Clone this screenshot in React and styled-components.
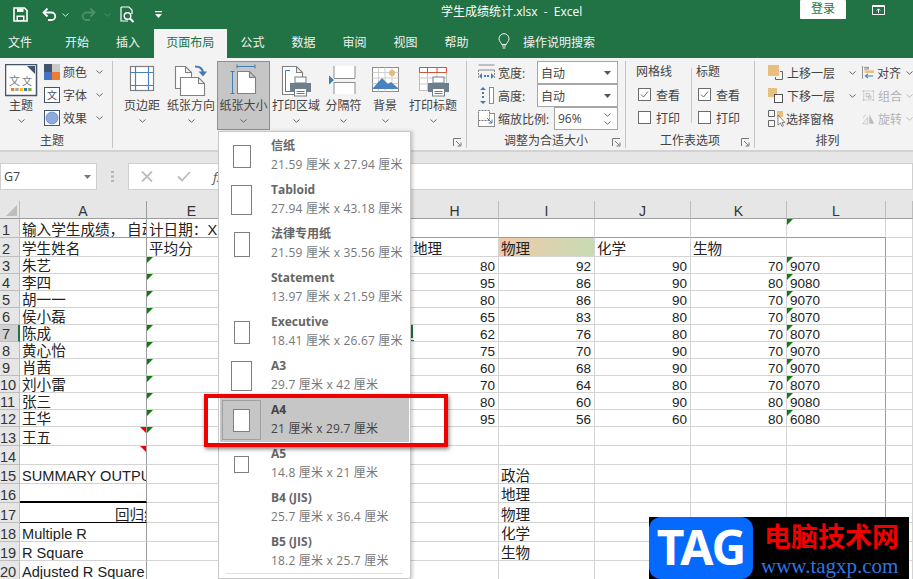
import React from 'react';
import styled, { createGlobalStyle } from 'styled-components';

const UI_FONT = `"Open Sans", "Noto Sans CJK SC", sans-serif`;
const SHEET_FONT = `"Liberation Sans", "Noto Sans CJK SC", sans-serif`;
const GREEN = '#217346';

const GlobalStyle = createGlobalStyle`
  html, body {
    margin: 0;
    padding: 0;
    background: #fff;
    overflow: hidden;
  }
  * {
    box-sizing: border-box;
  }
`;

const Page = styled.div`
  position: relative;
  width: 913px;
  height: 579px;
  overflow: hidden;
  font-family: ${UI_FONT};
  font-size: 12px;
  color: #444;
`;

/* title bar */
const TitleBar = styled.div`
  height: 29px;
  background: ${GREEN};
  display: flex;
  align-items: center;
  color: #fff;
`;

const Qat = styled.div`
  width: 441px;
  height: 100%;
  display: flex;
  align-items: center;
  padding-left: 13px;
`;

const QatItem = styled.span`
  display: flex;
  margin-left: ${(p) => p.$ml || 0}px;
  transform: ${(p) => (p.$flip ? 'scaleX(-1)' : 'none')};
`;

const DocTitle = styled.div`
  width: 359px;
  font-size: 12px;
  line-height: 16px;
  margin-top: -6px;
  white-space: pre;
`;

const LoginButton = styled.div`
  width: 46px;
  height: 19px;
  margin-top: -10px;
  background: #fff;
  border-radius: 1px;
  color: ${GREEN};
  text-align: center;
  line-height: 18px;
`;

const RestoreIcon = styled.span`
  display: flex;
  margin: -10px 0 0 26px;
`;

/* tabs */
const TabBar = styled.div`
  height: 29px;
  background: ${GREEN};
  display: flex;
  align-items: stretch;
  color: #f1f1f1;
`;

const Tab = styled.div`
  width: ${(p) => p.$w}px;
  display: flex;
  align-items: center;
  justify-content: ${(p) => (p.$start ? 'flex-start' : 'center')};
  padding: ${(p) => (p.$start ? '0 0 4px 8px' : '0 0 4px')};
  background: ${(p) => (p.$active ? '#f3f3f3' : 'transparent')};
  color: ${(p) => (p.$active ? GREEN : 'inherit')};
`;

const SearchTab = styled.div`
  display: flex;
  align-items: center;
  gap: 13px;
  margin-left: 16px;
  padding-bottom: 4px;
`;

/* ribbon */
const Ribbon = styled.div`
  height: 94px;
  padding-top: 3px;
  background: #f3f3f3;
  border-bottom: 2px solid #d2d2d2;
  display: flex;
  align-items: flex-start;
`;

const Group = styled.div`
  position: relative;
  width: ${(p) => p.$w}px;
  height: 87px;
  flex: none;
  border-right: ${(p) => (p.$last ? 'none' : '1px solid #c4c4c4')};
  display: flex;
  flex-direction: column;
`;

const GroupBody = styled.div`
  height: 73px;
  display: flex;
  padding-left: ${(p) => p.$pl || 0}px;
`;

const GroupLabel = styled.div`
  flex: 1;
  text-align: center;
  line-height: 14px;
  color: #444;
  padding-right: ${(p) => p.$pr || 0}px;
`;

const Launcher = styled.span`
  position: absolute;
  right: 4px;
  bottom: 1px;
  display: flex;
`;

const BigButton = styled.div`
  width: ${(p) => p.$w}px;
  height: 69px;
  flex: none;
  display: flex;
  flex-direction: column;
  align-items: center;
  padding-top: 3px;
  background: ${(p) => (p.$active ? '#c6c6c6' : 'transparent')};
  outline: ${(p) => (p.$active ? '1px solid #8f8f8f' : 'none')};
  outline-offset: -1px;
  white-space: nowrap;
`;

const BigIcon = styled.span`
  height: 33px;
  display: flex;
`;

const BigLabel = styled.span`
  line-height: 16px;
  margin-top: 1px;
`;

const BigChevron = styled.span`
  display: flex;
  margin-top: 5px;
`;

const ThemeColumn = styled.div`
  margin-left: 5px;
  padding-top: 3px;
  display: flex;
  flex-direction: column;
  gap: 7px;
`;

const ThemeRow = styled.div`
  display: flex;
  align-items: center;
  height: 16px;
  gap: 3px;
`;

const RowChevron = styled.span`
  display: flex;
  margin-left: ${(p) => p.$ml || 6}px;
`;

const ScaleColumn = styled.div`
  width: 100%;
  padding: 0 7px 0 11px;
  display: flex;
  flex-direction: column;
`;

const ScaleRow = styled.div`
  height: 23px;
  display: flex;
  align-items: center;
  gap: 3px;
  justify-content: flex-start;
`;

const ComboBox = styled.div`
  width: ${(p) => p.$w}px;
  height: 23px;
  margin-left: auto;
  background: #fff;
  border: 1px solid #a6a6a6;
  display: flex;
  align-items: center;
  justify-content: space-between;
  padding: 0 6px 0 3px;
`;

const SpinArrows = styled.span`
  display: flex;
  flex-direction: column;
  gap: 4px;
`;

const OptionColumn = styled.div`
  width: ${(p) => p.$w}px;
  padding-left: ${(p) => p.$pl || 0}px;
  display: flex;
  flex-direction: column;
`;

const OptionTitle = styled.div`
  height: 22px;
  line-height: 22px;
`;

const OptionRow = styled.div`
  height: 23px;
  display: flex;
  align-items: center;
  gap: 5px;
  padding-left: 2px;
`;

const CheckBox = styled.span`
  width: 13px;
  height: 13px;
  background: #fff;
  border: 1px solid #6b6b6b;
  display: flex;
`;

const OptionDivider = styled.span`
  width: 1px;
  height: 55px;
  margin-top: 7px;
  background: #c8c8c8;
  flex: none;
`;

const ArrangeColumn = styled.div`
  width: ${(p) => p.$w}px;
  flex: none;
  display: flex;
  flex-direction: column;
`;

const ArrangeRow = styled.div`
  height: 23px;
  display: flex;
  align-items: center;
  gap: ${(p) => p.$gap || 3}px;
  white-space: nowrap;
  color: ${(p) => (p.$off ? '#b4b4b4' : '#444')};
`;

/* formula bar */
const FormulaArea = styled.div`
  height: 49px;
  padding-top: 11px;
  background: #e6e6e6;
  display: flex;
  align-items: flex-start;
`;

const NameBox = styled.div`
  width: 97px;
  height: 27px;
  background: #fff;
  border: 1px solid #cfcfcf;
  display: flex;
  align-items: center;
  justify-content: space-between;
  padding: 0 5px 0 3px;
  font-size: 12.5px;
  color: #444;
`;

const Grip = styled.span`
  width: 31px;
  height: 27px;
  display: flex;
  align-items: center;
  justify-content: center;
`;

const FormulaBox = styled.div`
  flex: 1;
  height: 27px;
  background: #fff;
  border: 1px solid #cfcfcf;
  display: flex;
  align-items: center;
  gap: 24px;
  padding-left: 12px;
`;

const FxLabel = styled.span`
  margin-left: -2px;
  font-style: italic;
  font-size: 13px;
  color: #555;
`;

/* sheet */
const Sheet = styled.div`
  display: flex;
  flex-direction: column;
  font-family: ${SHEET_FONT};
  color: #222;
`;

const SheetRow = styled.div`
  height: ${(p) => p.$h}px;
  display: flex;
  flex: none;
`;

const Corner = styled.div`
  width: 20px;
  background: #e6e6e6;
  border-right: 1px solid #bdbdbd;
  border-bottom: 1px solid #9c9c9c;
  display: flex;
  align-items: flex-end;
  justify-content: flex-end;
  padding: 0 2px 2px 0;
`;

const ColHeader = styled.div`
  width: ${(p) => p.$w}px;
  background: #e6e6e6;
  border-right: 1px solid ${(p) => (p.$dark ? '#9c9c9c' : '#bdbdbd')};
  border-bottom: 1px solid #9c9c9c;
  text-align: center;
  font-size: 14px;
  line-height: 21px;
  color: #333;
`;

const RowHeader = styled.div`
  width: 20px;
  flex: none;
  background: ${(p) => (p.$sel ? '#d0d0d0' : '#e6e6e6')};
  border-right: ${(p) => (p.$sel ? `2px solid ${GREEN}` : '1px solid #bdbdbd')};
  border-bottom: 1px solid #bdbdbd;
  font-size: 14.6px;
  line-height: 13px;
  overflow: hidden;
  color: #333;
  display: flex;
  align-items: flex-end;
  justify-content: flex-start;
  padding-left: ${(p) => (p.$wide ? 0 : 2)}px;
`;

const Cell = styled.div`
  position: relative;
  width: ${(p) => p.$w}px;
  flex: none;
  overflow: hidden;
  white-space: nowrap;
  display: flex;
  align-items: flex-end;
  justify-content: ${(p) => (p.$num ? 'flex-end' : 'flex-start')};
  padding: ${(p) => (p.$num ? '0 3px 0 0' : `0 0 0 ${p.$pl ?? 2}px`)};
  font-size: ${(p) => (p.$num ? 13.5 : 14.6)}px;
  line-height: 13px;
  background: ${(p) => (p.$gradient ? 'linear-gradient(100deg, #f2c9a8, #c6dcb4)' : '#fff')};
  border-right: 1px solid ${(p) => (p.$edge ? '#9c9c9c' : '#d4d4d4')};
  border-bottom: ${(p) => p.$bottom || '1px solid #d4d4d4'};
`;

const CornerMark = styled.span`
  position: absolute;
  top: 0;
  width: 0;
  height: 0;
  border-style: solid;
  ${(p) =>
    p.$red
      ? 'right: 0; border-width: 6px 0 0 6px; border-color: #f00000 transparent transparent transparent;'
      : 'left: 0; border-width: 6px 6px 0 0; border-color: #0a7f0a transparent transparent transparent;'}
`;

const SelectEdge = styled.span`
  position: absolute;
  left: 0;
  top: 0;
  width: 2px;
  height: 13px;
  background: ${GREEN};

  &::after {
    content: '';
    position: absolute;
    left: 0;
    top: 15px;
    width: 3px;
    height: 2px;
    background: ${GREEN};
  }
`;

/* paper size menu */
const Menu = styled.div`
  position: absolute;
  left: 218px;
  top: 131px;
  width: 193px;
  height: 448px;
  padding: 2px 1px 0;
  background: #fff;
  border: 1px solid #c8c8c8;
  box-shadow: 2px 0 3px rgba(0, 0, 0, 0.18);
`;

const MenuItem = styled.div`
  height: 44px;
  display: flex;
  align-items: center;
  gap: 10px;
  padding-left: 2px;
  background: ${(p) => (p.$sel ? '#c6c6c6' : 'transparent')};
`;

const Thumb = styled.div`
  width: 39px;
  height: 40px;
  flex: none;
  display: flex;
  align-items: center;
  justify-content: center;
  border: 1px solid ${(p) => (p.$sel ? '#9f9f9f' : 'transparent')};
`;

const Paper = styled.div`
  width: ${(p) => p.$w}px;
  height: ${(p) => p.$h}px;
  background: #fff;
  border: 1px solid #7f7f7f;
`;

const MenuText = styled.div`
  display: flex;
  flex-direction: column;
  gap: 2px;
  margin-top: -2px;
  white-space: nowrap;
`;

const MenuTitle = styled.div`
  font-weight: 700;
  line-height: 17px;
  color: ${(p) => (p.$sel ? '#444' : '#666')};
`;

const MenuSize = styled.div`
  line-height: 17px;
  letter-spacing: 0.2px;
  color: ${(p) => (p.$sel ? '#444' : '#777')};
`;

const MenuDivider = styled.div`
  height: 1px;
  margin: -1px 6px 0;
  background: #e0e0e0;
`;

const Callout = styled.div`
  position: absolute;
  left: 204px;
  top: 394px;
  width: 244px;
  height: 53px;
  border: 4px solid #f00000;
  box-shadow: 1px 2px 4px rgba(0, 0, 0, 0.5);
`;

/* watermark */
const Watermark = styled.div`
  position: absolute;
  left: 649px;
  top: 517px;
  width: 260px;
  height: 62px;
  background: #000;
  display: flex;
`;

const TagBadge = styled.div`
  width: 104px;
  height: 62px;
  background: #0669fd;
  border-radius: 12px;
  color: #fff;
  font-family: "Noto Sans", sans-serif;
  font-weight: 700;
  font-size: 48px;
  letter-spacing: -1px;
  line-height: 60px;
  text-align: center;
`;

const WatermarkText = styled.div`
  flex: 1;
  padding-left: 11px;
  display: flex;
  flex-direction: column;
`;

const SiteName = styled.div`
  color: #f00000;
  font-family: "Noto Sans CJK SC", sans-serif;
  font-weight: 700;
  font-size: 27px;
  line-height: 38px;
  white-space: nowrap;
`;

const SiteUrl = styled.div`
  color: #2f74e0;
  font-family: "Liberation Serif", serif;
  font-size: 21px;
  line-height: 22px;
  margin-left: -3px;
  white-space: nowrap;
`;

/* icons */
const Chevron = ({ color = '#666' }) => (
  <svg width="7" height="4" viewBox="0 0 7 4">
    <path d="M.5.5 3.5 3.2 6.5.5" fill="none" stroke={color} />
  </svg>
);

const Caret = ({ color = '#555' }) => (
  <svg width="7" height="4" viewBox="0 0 7 4">
    <path d="M0 0h7L3.5 4z" fill={color} />
  </svg>
);

const SaveIcon = () => (
  <svg width="15" height="15" viewBox="0 0 15 15">
    <path d="M1 1h10.500L14 3.500V14H1z" fill="none" stroke="#fff" strokeWidth="1.600" />
    <path d="M4 1.500h6.500V5H4zM3.500 8.500h8V14h-8z" fill="#fff" />
    <path d="M5 10h5v3H5z" fill={GREEN} />
  </svg>
);

const UndoIcon = ({ color = '#fff' }) => (
  <svg width="15" height="13" viewBox="0 0 15 13">
    <path d="M2 4.500h7.500a3.600 3.600 0 0 1 0 7.500H6" fill="none" stroke={color} strokeWidth="1.800" />
    <path d="M5.500.5l-4 4 4 4" fill="none" stroke={color} strokeWidth="1.800" />
  </svg>
);

const PreviewIcon = () => (
  <svg width="16" height="17" viewBox="0 0 16 17">
    <path d="M1 1h8l3 3v4M8 15H1V1" fill="none" stroke="#fff" strokeWidth="1.200" />
    <circle cx="7.500" cy="10" r="3.300" fill="none" stroke="#fff" strokeWidth="1.400" />
    <path d="m10 12.500 3.500 3.500" stroke="#fff" strokeWidth="2" />
  </svg>
);

const QatMore = () => (
  <svg width="7" height="7" viewBox="0 0 7 7">
    <path d="M0 0h7v1.200H0zM0 3h7L3.500 7z" fill="#fff" />
  </svg>
);

const Restore = () => (
  <svg width="13" height="10" viewBox="0 0 13 10">
    <path d="M.5.5h12v9H.5z" fill="none" stroke="#fff" />
    <path d="M.5 1.500h12" stroke="#fff" />
    <path d="M6.500 8V4M4.800 5.500l1.700-1.700 1.700 1.700" fill="none" stroke="#fff" />
  </svg>
);

const Bulb = () => (
  <svg width="12" height="17" viewBox="0 0 12 17">
    <path d="M3.700 11.500C3.400 9.500 1 8.500 1 5.700A5 5 0 0 1 11 5.700C11 8.500 8.600 9.500 8.300 11.500z" fill="none" stroke="#f1f1f1" />
    <path d="M4 13h4M4.500 15h3" stroke="#f1f1f1" />
  </svg>
);

const LauncherIcon = () => (
  <svg width="9" height="9" viewBox="0 0 9 9">
    <path d="M.5 8V.5H8" fill="none" stroke="#777" />
    <path d="M3 3l4.500 4.500M4.500 8H8V4.500" fill="none" stroke="#777" />
  </svg>
);

const ThemeIcon = () => (
  <svg width="33" height="33" viewBox="0 0 33 33">
    <rect x=".5" y=".5" width="31" height="31" fill="#fff" stroke="#44546a" strokeWidth="1.500" />
    <path d="M22 2h8v8z" fill="#44546a" />
    <text x="4" y="21" fontSize="11" fill="#6f7f8f" fontFamily="Noto Sans CJK SC">文</text>
    <text x="17" y="21" fontSize="10" fill="#6f7f8f" fontFamily="Noto Sans CJK SC">文</text>
    {['#ed7d31', '#a5a5a5', '#ffc000', '#4472c4', '#70ad47'].map((c, i) => (
      <rect key={c} x={6 + i * 4.3} y="24" width="3.300" height="3" fill={c} />
    ))}
  </svg>
);

const ColorsIcon = () => (
  <svg width="16" height="16" viewBox="0 0 16 16">
    <path d="M0 0h8v8H0z" fill="#44546a" />
    <path d="M8 0h8v8H8z" fill="#c9c9c9" />
    <path d="M0 8h8v8H0z" fill="#4472c4" />
    <path d="M8 8h8v8H8z" fill="#ed7d31" />
  </svg>
);

const FontsIcon = () => (
  <svg width="16" height="16" viewBox="0 0 16 16">
    <rect x=".5" y=".5" width="15" height="15" fill="#fff" stroke="#44546a" />
    <text x="3" y="12" fontSize="10" fill="#44546a" fontFamily="Noto Sans CJK SC">文</text>
    <path d="m5 13 5-6" stroke="#d9534f" strokeWidth=".7" />
  </svg>
);

const EffectsIcon = () => (
  <svg width="16" height="16" viewBox="0 0 16 16">
    <rect x=".5" y=".5" width="15" height="15" fill="#fff" stroke="#44546a" />
    <circle cx="8" cy="8" r="6" fill="#8faadc" stroke="#4472c4" strokeWidth=".6" />
  </svg>
);

const MarginsIcon = () => (
  <svg width="32" height="32" viewBox="0 0 32 32">
    <rect x="4.500" y="2.500" width="23" height="24" fill="#fff" stroke="#808080" strokeWidth="1.200" />
    <path d="M9.500 2.500v24M22.500 2.500v24M4.500 8.500h23M4.500 21.500h23" stroke="#4a82bd" strokeWidth="1.200" />
  </svg>
);

const Doc = ({ x, y, w, h, f = 6 }) => (
  <path
    d={`M${x} ${y}h${w - f}l${f} ${f}v${h - f}h${-w}zM${x + w - f} ${y}v${f}h${f}`}
    fill="#fff"
    stroke="#808080"
    strokeWidth="1.100"
  />
);

const OrientationIcon = () => (
  <svg width="34" height="32" viewBox="0 0 34 32">
    <Doc x={1.5} y={2.5} w={16} h={22} />
    <Doc x={6.5} y={13.5} w={24} h={18} />
    <path d="M21 2.500c5 0 8 2 8 7" fill="none" stroke="#3f7cb8" strokeWidth="2.200" />
    <path d="m24.500 7.500 4.500 5 4-5z" fill="#3f7cb8" />
  </svg>
);

const SizeIcon = () => (
  <svg width="32" height="32" viewBox="0 0 32 32">
    <Doc x={9.5} y={7.5} w={18} h={22} />
    <path d="M9 2.500h18M9 .5v4M27 .5v4M4.500 7.500v22M2.500 7.500h4M2.500 29.500h4" fill="none" stroke="#3f7cb8" />
  </svg>
);

const PrinterShape = ({ x, y }) => (
  <g transform={`translate(${x} ${y})`}>
    <rect x="5" y="0" width="11" height="6" fill="#fff" stroke="#6d7e8c" />
    <path d="M0 6h21v9h-4v-2H4v2H0z" fill="#6d7e8c" />
    <rect x="4.500" y="11.500" width="12" height="7.500" fill="#fff" stroke="#6d7e8c" />
    <path d="M6.500 14.500h8M6.500 16.500h8" stroke="#4a82bd" />
  </g>
);

const PrintAreaIcon = () => (
  <svg width="32" height="33" viewBox="0 0 32 33">
    <Doc x={2.5} y={2.5} w={20} h={28} />
    <path d="M10 6.500H5.500v21H10" fill="none" stroke="#3f7cb8" />
    <PrinterShape x={10} y={13} />
  </svg>
);

const BreaksIcon = () => (
  <svg width="32" height="32" viewBox="0 0 32 32">
    <path d="M6 2h21v12H6zM6 18h21v12H6z" fill="#fff" />
    <path d="M6 14.500h21M6 18.500h21M6 2v12M27 2v12M6 18v12M27 18v12" stroke="#8c8c8c" fill="none" />
    <path d="M1 11.500l5 4.500-5 4.500z" fill="#3f7cb8" />
  </svg>
);

const BackgroundIcon = () => (
  <svg width="32" height="32" viewBox="0 0 32 32">
    <rect x="3.500" y="3.500" width="26" height="24" fill="#fff" stroke="#8c8c8c" />
    <path d="M3.500 8.500h26M3.500 14h26M3.500 19.500h26M9.500 3.500v24M16 3.500v24M23 3.500v24" stroke="#cfcfcf" />
    <circle cx="23" cy="9" r="3" fill="#e8b877" />
    <path d="M4 24l9-10 6 6 3-2 7 6v1H4z" fill="#4a82bd" />
  </svg>
);

const PrintTitlesIcon = () => (
  <svg width="33" height="33" viewBox="0 0 33 33">
    <rect x="2.500" y="3.500" width="27" height="23" fill="#fff" stroke="#c0c0c0" />
    <path d="M2.500 14h27M2.500 20h27M10.500 8.500v18M20 8.500v18" stroke="#c8c8c8" />
    <path d="M2.500 3.500h27M2.500 8.500h27M2.500 3.500v5M10.500 3.500v5M20 3.500v5M29.500 3.500v5" stroke="#d0553a" fill="none" />
    <PrinterShape x={11} y={13} />
  </svg>
);

const WidthIcon = () => (
  <svg width="17" height="17" viewBox="0 0 17 17">
    <path d="M.5 1h16M.5 6h16" stroke="#8c8c8c" />
    <path d="M.5 6v8M16.500 6v8" stroke="#8c8c8c" strokeDasharray="2 1" />
    <path d="M1 12l3-3v6zM16 12l-3-3v6zM6 11h2v2H6zM9 11h2v2H9z" fill="#3f7cb8" />
  </svg>
);

const HeightIcon = () => (
  <svg width="17" height="17" viewBox="0 0 17 17">
    <rect x="11.500" y=".5" width="4" height="16" fill="#fff" stroke="#8c8c8c" />
    <path d="M5 0l3 3H2zM5 17l-3-3h6zM4 5h2v2H4zM4 9h2v2H4z" fill="#3f7cb8" />
  </svg>
);

const ScaleIcon = () => (
  <svg width="17" height="17" viewBox="0 0 17 17">
    <rect x=".5" y="3.500" width="16" height="13" fill="#fff" stroke="#8c8c8c" />
    <rect x=".5" y=".5" width="11" height="10" fill="#fff" stroke="#777" strokeDasharray="2 1" />
    <path d="M9 8l5 5M14 9.500V13h-3.500" fill="none" stroke="#3f7cb8" />
  </svg>
);

const Check = () => (
  <svg width="11" height="11" viewBox="0 0 11 11">
    <path d="m2 5.500 2.500 2.500L9 2.500" fill="none" stroke="#6b6b6b" />
  </svg>
);

const ForwardIcon = () => (
  <svg width="15" height="15" viewBox="0 0 15 15">
    <path d="M0 0h11v11H0z" fill="#e9bf80" />
    <path d="M12 6.500h2.500v8h-7V12" fill="none" stroke="#666" />
  </svg>
);

const BackwardIcon = () => (
  <svg width="15" height="15" viewBox="0 0 15 15">
    <path d="M0 0h9v9H0z" fill="#e9bf80" />
    <rect x="6.500" y="6.500" width="8" height="8" fill="#fff" stroke="#555" />
  </svg>
);

const PaneIcon = () => (
  <svg width="17" height="17" viewBox="0 0 17 17">
    <path d="M.5.5h6v6h-6zM.5 10.500h6v6h-6z" fill="none" stroke="#666" />
    <path d="M9 1h6v6H9z" fill="#e9bf80" />
    <path d="M10 5v10l2.500-2 1.500 3.500 1.500-.8-1.500-3.200h3z" fill="#fff" stroke="#666" strokeWidth=".8" />
  </svg>
);

const AlignIcon = () => (
  <svg width="14" height="15" viewBox="0 0 14 15">
    <path d="M.5 0v15" stroke="#777" />
    <path d="M2.500 1.500h5v2h-5" fill="none" stroke="#777" />
    <path d="M3 5h11v3H3z" fill="#e9bf80" />
    <path d="M13 11.500H4M7 9l-3 2.500L7 14" fill="none" stroke="#3f7cb8" strokeWidth="1.200" />
  </svg>
);

const GroupIcon = () => (
  <svg width="16" height="15" viewBox="0 0 16 15">
    <path d="M1 1h2v2H1zM13 1h2v2h-2zM1 12h2v2H1zM13 12h2v2h-2z" fill="#bbb" />
    <path d="M2 3v9M14 3v9M3 2h10M3 13h10" stroke="#ccc" />
    <path d="M5 5h4v4H5zM8 8h3v3H8z" fill="none" stroke="#bbb" />
  </svg>
);

const RotateIcon = () => (
  <svg width="16" height="14" viewBox="0 0 16 14">
    <path d="M1 13l6-8v8z" fill="none" stroke="#c0c0c0" />
    <path d="M9 1v12h6z" fill="#bbb" />
    <path d="M2 6c0-2 1-3 3-4" fill="none" stroke="#c0c0c0" />
  </svg>
);

/* sheet data */
const COLS = [
  ['A', 127],
  ['E', 90],
  ['F', 87],
  ['G', 87],
  ['H', 88],
  ['I', 96],
  ['J', 96],
  ['K', 96],
  ['L', 99],
  ['', 27],
];
const SCORE_COLS = ['H', 'I', 'J', 'K', 'L'];
const ROW_HEIGHTS = [19, 19, 17, 17, 17, 17, 17, 17, 17, 17, 17, 17, 19, 19, 19, 19, 20, 19, 19, 19];
const NAMES = ['朱艺', '李四', '胡一一', '侯小磊', '陈成', '黄心怡', '肖茜', '刘小雷', '张三', '王华'];
const SCORES = [
  [80, 92, 90, 70, '9070'],
  [95, 86, 90, 80, '9080'],
  [80, 86, 90, 70, '9070'],
  [65, 83, 80, 70, '8070'],
  [62, 76, 80, 70, '8070'],
  [75, 70, 90, 70, '9070'],
  [60, 68, 90, 70, '9070'],
  [70, 64, 80, 70, '8070'],
  [80, 60, 90, 80, '9080'],
  [95, 56, 60, 80, '6080'],
];
const LEFT_LABELS = { 15: '政治', 16: '地理', 17: '物理', 18: '化学', 19: '生物' };
const A_TEXT = {
  1: '输入学生成绩，\u2009自动统',
  2: '学生姓名',
  13: '王五',
  15: 'SUMMARY OUTPUT',
  17: '回归统计',
  18: 'Multiple R',
  19: 'R Square',
  20: 'Adjusted R Square',
};

function cellProps(col, row) {
  const p = { text: '' };
  if (col === 'A') {
    p.text = row >= 3 && row <= 12 ? NAMES[row - 3] : A_TEXT[row] || '';
    p.edge = true;
    if (row === 13 || row === 14) p.red = true;
    if (row === 16) p.bottom = '2px solid #000';
    if (row === 17) {
      p.bottom = '1px solid #000';
      p.pl = 95;
    }
  }
  if (col === 'E') {
    if (row === 1) p.text = '计日期：X';
    if (row === 2) p.text = '平均分';
    if (row >= 3 && row <= 13) p.tri = true;
  }
  if (col === 'H' && row === 7) p.selected = true;
  if (row >= 3 && row <= 12 && SCORE_COLS.includes(col)) {
    p.text = SCORES[row - 3][SCORE_COLS.indexOf(col)];
    p.num = col !== 'L';
    if (col === 'L') {
      p.tri = true;
      p.digits = true;
    }
  }
  if (row === 2) {
    if (col === 'H') p.text = '地理';
    if (col === 'I') {
      p.text = '物理';
      p.gradient = true;
    }
    if (col === 'J') p.text = '化学';
    if (col === 'K') p.text = '生物';
  }
  if (col === 'L' && row === 1) p.tri = true;
  if (col === 'L' && row >= 2) p.edge = true;
  if (col === 'I' && LEFT_LABELS[row]) p.text = LEFT_LABELS[row];
  if (row === 1 && col !== '') p.bottom = '1px solid #9c9c9c';
  return p;
}

const Digits = styled.span`
  font-size: 13.5px;
  padding-left: 1px;
`;

const PAPERS = [
  { title: '信纸', size: '21.59 厘米 x 27.94 厘米', w: 18, h: 23 },
  { title: 'Tabloid', size: '27.94 厘米 x 43.18 厘米', w: 21, h: 30 },
  { title: '法律专用纸', size: '21.59 厘米 x 35.56 厘米', w: 16, h: 25 },
  { title: 'Statement', size: '13.97 厘米 x 21.59 厘米' },
  { title: 'Executive', size: '18.41 厘米 x 26.67 厘米', w: 16, h: 23 },
  { title: 'A3', size: '29.7 厘米 x 42 厘米', w: 21, h: 30 },
  { title: 'A4', size: '21 厘米 x 29.7 厘米', w: 17, h: 23, sel: true },
  { title: 'A5', size: '14.8 厘米 x 21 厘米', w: 15, h: 17 },
  { title: 'B4 (JIS)', size: '25.7 厘米 x 36.4 厘米' },
  { title: 'B5 (JIS)', size: '18.2 厘米 x 25.7 厘米' },
];

const TABS = [
  ['文件', 51.5, true],
  ['开始', 51],
  ['插入', 51],
  ['页面布局', 73.5],
  ['公式', 51],
  ['数据', 51],
  ['审阅', 51],
  ['视图', 51],
  ['帮助', 51],
];

const BIG_BUTTONS = [
  ['页边距', 46, MarginsIcon],
  ['纸张方向', 52, OrientationIcon],
  ['纸张大小', 53, SizeIcon, true],
  ['打印区域', 52, PrintAreaIcon],
  ['分隔符', 43, BreaksIcon],
  ['背景', 40, BackgroundIcon],
  ['打印标题', 56, PrintTitlesIcon],
];

function App() {
  return (
    <Page>
      <GlobalStyle />
      <TitleBar>
        <Qat>
          <QatItem><SaveIcon /></QatItem>
          <QatItem $ml={14}><UndoIcon /></QatItem>
          <QatItem $ml={5}><Chevron color="#cfe0d6" /></QatItem>
          <QatItem $ml={12} $flip><UndoIcon color="#4f8f6c" /></QatItem>
          <QatItem $ml={8}><Chevron color="#4f8f6c" /></QatItem>
          <QatItem $ml={9}><PreviewIcon /></QatItem>
          <QatItem $ml={19}><QatMore /></QatItem>
        </Qat>
        <DocTitle>学生成绩统计.xlsx  -  Excel</DocTitle>
        <LoginButton>登录</LoginButton>
        <RestoreIcon><Restore /></RestoreIcon>
      </TitleBar>

      <TabBar>
        {TABS.map(([label, w, start]) => (
          <Tab key={label} $w={w} $start={start} $active={label === '页面布局'}>{label}</Tab>
        ))}
        <SearchTab>
          <Bulb />
          <span>操作说明搜索</span>
        </SearchTab>
      </TabBar>

      <Ribbon>
        <Group $w={113}>
          <GroupBody $pl={3}>
            <BigButton $w={36}>
              <BigIcon><ThemeIcon /></BigIcon>
              <BigLabel>主题</BigLabel>
              <BigChevron><Chevron /></BigChevron>
            </BigButton>
            <ThemeColumn>
              <ThemeRow><ColorsIcon /><span>颜色</span><RowChevron><Chevron /></RowChevron></ThemeRow>
              <ThemeRow><FontsIcon /><span>字体</span><RowChevron><Chevron /></RowChevron></ThemeRow>
              <ThemeRow><EffectsIcon /><span>效果</span><RowChevron><Chevron /></RowChevron></ThemeRow>
            </ThemeColumn>
          </GroupBody>
          <GroupLabel $pr={8}>主题</GroupLabel>
        </Group>

        <Group $w={354}>
          <GroupBody $pl={6}>
            {BIG_BUTTONS.map(([label, w, Icon, active]) => (
              <BigButton key={label} $w={w} $active={active}>
                <BigIcon><Icon /></BigIcon>
                <BigLabel>{label}</BigLabel>
                <BigChevron><Chevron /></BigChevron>
              </BigButton>
            ))}
          </GroupBody>
          <GroupLabel />
          <Launcher><LauncherIcon /></Launcher>
        </Group>

        <Group $w={159}>
          <GroupBody>
            <ScaleColumn>
              <ScaleRow>
                <WidthIcon />
                <span>宽度:</span>
                <ComboBox $w={81}>自动<Caret /></ComboBox>
              </ScaleRow>
              <ScaleRow>
                <HeightIcon />
                <span>高度:</span>
                <ComboBox $w={81}>自动<Caret /></ComboBox>
              </ScaleRow>
              <ScaleRow>
                <ScaleIcon />
                <span>缩放比例:</span>
                <ComboBox $w={64}>
                  96%
                  <SpinArrows><Chevron /><Chevron /></SpinArrows>
                </ComboBox>
              </ScaleRow>
            </ScaleColumn>
          </GroupBody>
          <GroupLabel>调整为合适大小</GroupLabel>
          <Launcher><LauncherIcon /></Launcher>
        </Group>

        <Group $w={129}>
          <GroupBody $pl={10}>
            <OptionColumn $w={55}>
              <OptionTitle>网格线</OptionTitle>
              <OptionRow><CheckBox><Check /></CheckBox>查看</OptionRow>
              <OptionRow><CheckBox />打印</OptionRow>
            </OptionColumn>
            <OptionDivider />
            <OptionColumn $w={60} $pl={4}>
              <OptionTitle>标题</OptionTitle>
              <OptionRow><CheckBox><Check /></CheckBox>查看</OptionRow>
              <OptionRow><CheckBox />打印</OptionRow>
            </OptionColumn>
          </GroupBody>
          <GroupLabel>工作表选项</GroupLabel>
          <Launcher><LauncherIcon /></Launcher>
        </Group>

        <Group $w={158} $last>
          <GroupBody $pl={13}>
            <ArrangeColumn $w={94}>
              <ArrangeRow $gap={4}><ForwardIcon /><span>上移一层</span><RowChevron $ml={10}><Chevron /></RowChevron></ArrangeRow>
              <ArrangeRow $gap={4}><BackwardIcon /><span>下移一层</span><RowChevron $ml={10}><Chevron /></RowChevron></ArrangeRow>
              <ArrangeRow $gap={1}><PaneIcon /><span>选择窗格</span></ArrangeRow>
            </ArrangeColumn>
            <ArrangeColumn $w={51}>
              <ArrangeRow><AlignIcon /><span>对齐</span><RowChevron $ml={2}><Chevron /></RowChevron></ArrangeRow>
              <ArrangeRow $off><GroupIcon /><span>组合</span><RowChevron $ml={1}><Chevron color="#bbb" /></RowChevron></ArrangeRow>
              <ArrangeRow $off><RotateIcon /><span>旋转</span><RowChevron $ml={1}><Chevron color="#bbb" /></RowChevron></ArrangeRow>
            </ArrangeColumn>
          </GroupBody>
          <GroupLabel $pr={13}>排列</GroupLabel>
        </Group>
      </Ribbon>

      <FormulaArea>
        <NameBox>G7<Caret color="#777" /></NameBox>
        <Grip>
          <svg width="3" height="11" viewBox="0 0 3 11">
            <path d="M0 0h3v2H0zM0 4.500h3v2H0zM0 9h3v2H0z" fill="#b5b5b5" />
          </svg>
        </Grip>
        <FormulaBox>
          <svg width="12" height="11" viewBox="0 0 12 11">
            <path d="m1 .5 10 10M11 .5l-10 10" stroke="#bcbcbc" strokeWidth="1.800" />
          </svg>
          <svg width="14" height="11" viewBox="0 0 14 11">
            <path d="m1 5.500 4 4L13 1" fill="none" stroke="#bcbcbc" strokeWidth="1.800" />
          </svg>
          <FxLabel>fx</FxLabel>
        </FormulaBox>
      </FormulaArea>

      <Sheet>
        <SheetRow $h={18}>
          <Corner>
            <svg width="11" height="11" viewBox="0 0 11 11">
              <path d="M11 0v11H0z" fill="#bdbdbd" />
            </svg>
          </Corner>
          {COLS.map(([name, w]) => (
            <ColHeader key={name} $w={w} $dark={name === 'A'}>{name}</ColHeader>
          ))}
        </SheetRow>
        {ROW_HEIGHTS.map((h, i) => {
          const row = i + 1;
          return (
            <SheetRow key={row} $h={h}>
              <RowHeader $sel={row === 7} $wide={row >= 10}>{row}</RowHeader>
              {COLS.map(([name, w]) => {
                const c = cellProps(name, row);
                return (
                  <Cell
                    key={name}
                    $w={w}
                    $num={c.num}
                    $pl={c.pl}
                    $edge={c.edge}
                    $bottom={c.bottom}
                    $gradient={c.gradient}
                  >
                    {c.digits ? <Digits>{c.text}</Digits> : c.text}
                    {c.tri && <CornerMark />}
                    {c.red && <CornerMark $red />}
                    {c.selected && <SelectEdge />}
                  </Cell>
                );
              })}
            </SheetRow>
          );
        })}
      </Sheet>

      <Menu>
        {PAPERS.map((p) => (
          <MenuItem key={p.title} $sel={p.sel}>
            <Thumb $sel={p.sel}>{p.w && <Paper $w={p.w} $h={p.h} />}</Thumb>
            <MenuText>
              <MenuTitle $sel={p.sel}>{p.title}</MenuTitle>
              <MenuSize $sel={p.sel}>{p.size}</MenuSize>
            </MenuText>
          </MenuItem>
        ))}
        <MenuDivider />
      </Menu>
      <Callout />

      <Watermark>
        <TagBadge>TAG</TagBadge>
        <WatermarkText>
          <SiteName>电脑技术网</SiteName>
          <SiteUrl>www.tagxp.com</SiteUrl>
        </WatermarkText>
      </Watermark>
    </Page>
  );
}

export default App;
